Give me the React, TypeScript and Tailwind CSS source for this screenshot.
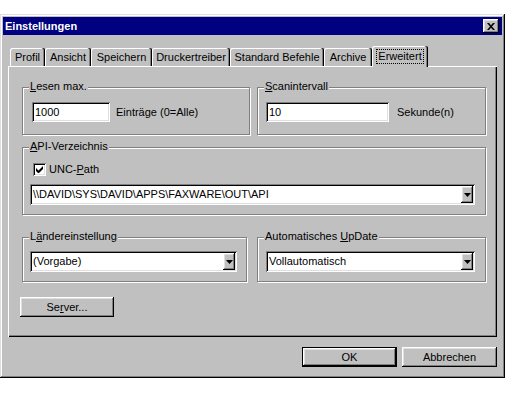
import React from "react";

// win95 bevels
const raised =
  "shadow-[inset_-1px_-1px_#000,inset_1px_1px_#fff,inset_-2px_-2px_#808080,inset_2px_2px_#dfdfdf]";
const sunken =
  "shadow-[inset_1px_1px_#808080,inset_-1px_-1px_#fff,inset_2px_2px_#000,inset_-2px_-2px_#dfdfdf]";
const frame =
  "shadow-[inset_-1px_-1px_#000,inset_1px_1px_#dfdfdf,inset_-2px_-2px_#808080,inset_2px_2px_#fff]";

const tabs = [
  { label: "Profil", w: "w-[35px]" },
  { label: "Ansicht", w: "w-[46px]" },
  { label: "Speichern", w: "w-[61px]" },
  { label: "Druckertreiber", w: "w-[78px]" },
  { label: "Standard Befehle", w: "w-[94px]" },
  { label: "Archive", w: "w-[48px]" },
];

function Group({
  label,
  className,
  children,
}: {
  label: React.ReactNode;
  className: string;
  children: React.ReactNode;
}) {
  return (
    <div
      className={`relative border border-[#808080] shadow-[1px_1px_#fff,inset_1px_1px_#fff] ${className}`}
    >
      <span className="absolute left-[6px] top-[-8px] bg-[#c0c0c0] px-[1px] leading-[13px]">
        {label}
      </span>
      {children}
    </div>
  );
}

function Combo({ value, className }: { value: string; className: string }) {
  return (
    <div className={`flex h-[21px] items-stretch bg-white p-[2px] ${sunken} ${className}`}>
      <span className="flex flex-1 items-center overflow-hidden whitespace-nowrap pl-[1px]">
        {value}
      </span>
      <span className={`flex w-[12px] items-center justify-center bg-[#c0c0c0] ${raised}`}>
        <svg width="7" height="4" viewBox="0 0 7 4">
          <path d="M0 0h7L3.5 4z" fill="#000" />
        </svg>
      </span>
    </div>
  );
}

function Button({
  children,
  className,
  isDefault,
}: {
  children: React.ReactNode;
  className: string;
  isDefault?: boolean;
}) {
  if (isDefault) {
    return (
      <div className={`border border-black ${className}`}>
        <div className={`flex h-full items-center justify-center bg-[#c0c0c0] ${raised}`}>
          {children}
        </div>
      </div>
    );
  }
  return (
    <div className={`flex items-center justify-center bg-[#c0c0c0] ${raised} ${className}`}>
      {children}
    </div>
  );
}

export default function App() {
  return (
    <div className="h-[393px] w-[520px] bg-white pt-[14px]">
      <div
        className={`flex h-[364px] w-[505px] flex-col bg-[#c0c0c0] p-[3px] font-['Liberation_Sans',Arial,sans-serif] text-[11px] leading-[13px] text-black ${frame}`}
      >
        {/* title bar */}
        <div className="flex h-[18px] items-center justify-between bg-[#000080] pl-[2px] pr-[3px]">
          <span className="font-bold text-white">Einstellungen</span>
          <div className={`flex h-[14px] w-[16px] items-center justify-center bg-[#c0c0c0] ${raised}`}>
            <svg width="8" height="7" viewBox="0 0 8 7">
              <path d="M0 0h2l2 2.2L6 0h2L5 3.5 8 7H6L4 4.8 2 7H0l3-3.5z" fill="#000" />
            </svg>
          </div>
        </div>

        <div className="flex flex-1 flex-col px-[5px] pt-[11px]">
          {/* tabs */}
          <div className="flex h-[20px] items-end pl-[2px]">
            {tabs.map((t) => (
              <div
                key={t.label}
                className={`flex h-[18px] justify-center rounded-t-[2px] pt-[3px] shadow-[inset_-1px_0_#000,inset_-2px_0_#808080,inset_1px_1px_#fff] ${t.w}`}
              >
                {t.label}
              </div>
            ))}
            <div className="relative z-10 mb-[-1px] flex h-[21px] w-[56px] justify-center rounded-t-[2px] bg-[#c0c0c0] pt-[3px] shadow-[inset_-1px_0_#000,inset_-2px_0_#808080,inset_1px_1px_#fff]">
              <span className="h-[15px] border border-dotted border-black px-[1px]">Erweitert</span>
            </div>
          </div>

          {/* panel */}
          <div className="flex h-[271px] flex-col pl-[14px] pt-[21px] shadow-[inset_1px_1px_#fff,inset_-1px_-1px_#000,inset_-2px_-2px_#808080]">
            <div className="flex gap-[7px]">
              <Group
                className="h-[48px] w-[228px]"
                label={
                  <>
                    <u>L</u>esen max.
                  </>
                }
              >
                <div className="flex items-center pl-[9px] pt-[14px]">
                  <div className={`flex h-[20px] w-[78px] items-center bg-white pl-[3px] ${sunken}`}>
                    1000
                  </div>
                  <span className="ml-[6px]">Einträge (0=Alle)</span>
                </div>
              </Group>
              <Group
                className="h-[48px] w-[229px]"
                label={
                  <>
                    <u>S</u>canintervall
                  </>
                }
              >
                <div className="flex items-center pl-[8px] pt-[14px]">
                  <div className={`flex h-[20px] w-[123px] items-center bg-white pl-[3px] ${sunken}`}>
                    10
                  </div>
                  <span className="ml-[8px]">Sekunde(n)</span>
                </div>
              </Group>
            </div>

            <Group
              className="mt-[12px] h-[68px] w-[464px]"
              label={
                <>
                  <u>A</u>PI-Verzeichnis
                </>
              }
            >
              <div className="flex flex-col pl-[7px] pt-[15px]">
                <div className="flex items-center">
                  <span
                    className={`ml-[3px] flex h-[13px] w-[13px] items-center justify-center bg-white ${sunken}`}
                  >
                    <svg width="7" height="7" viewBox="0 0 7 7">
                      <path d="M0 2v3l2 2h1l4-4V0L2.5 4.5z" fill="#000" />
                    </svg>
                  </span>
                  <span className="ml-[3px]">
                    UNC-<u>P</u>ath
                  </span>
                </div>
                <Combo
                  className="mt-[8px] w-[445px]"
                  value={"\\\\DAVID\\SYS\\DAVID\\APPS\\FAXWARE\\OUT\\API"}
                />
              </div>
            </Group>

            <div className="mt-[22px] flex gap-[10px]">
              <Group
                className="h-[45px] w-[225px]"
                label={
                  <>
                    L<u>ä</u>ndereinstellung
                  </>
                }
              >
                <div className="pl-[7px] pt-[13px]">
                  <Combo className="w-[207px]" value="(Vorgabe)" />
                </div>
              </Group>
              <Group
                className="h-[45px] w-[229px]"
                label={
                  <>
                    Automatisches <u>U</u>pDate
                  </>
                }
              >
                <div className="pl-[8px] pt-[13px]">
                  <Combo className="w-[209px]" value="Vollautomatisch" />
                </div>
              </Group>
            </div>

            <Button className="ml-[-2px] mt-[15px] h-[20px] w-[94px]">
              <span>
                Se<u>r</u>ver...
              </span>
            </Button>
          </div>

          {/* buttons */}
          <div className="mt-[10px] flex justify-end gap-[5px]">
            <Button isDefault className="h-[20px] w-[95px]">
              OK
            </Button>
            <Button className="h-[20px] w-[95px]">Abbrechen</Button>
          </div>
        </div>
      </div>
    </div>
  );
}
